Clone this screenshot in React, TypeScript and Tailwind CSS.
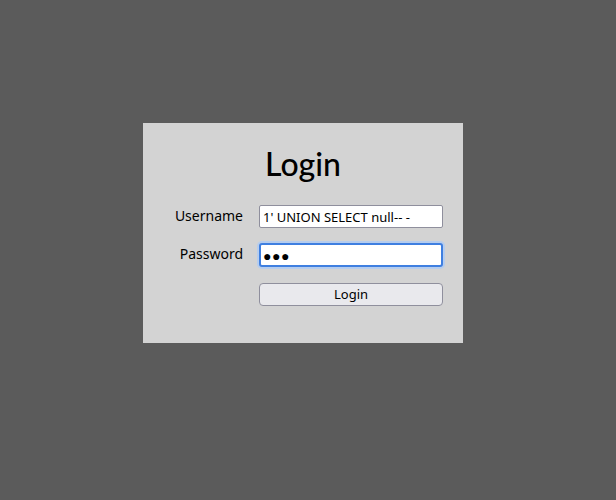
import React from 'react';

const FONT = "font-['Noto_Sans',sans-serif]";

export default function App() {
  return (
    <div className={`min-h-[500px] bg-[#5b5b5b] pt-[123px] pl-[143px] ${FONT}`}>
      <div className="w-[320px] h-[220px] bg-[#d3d3d3] pt-[19px] text-black">
        <h1 className="font-['Lato',sans-serif] text-[32px] font-medium leading-[44px] text-center">Login</h1>
        <form
          className="grid grid-cols-[100px_184px] gap-x-4 items-center mt-[19px]"
          onSubmit={(e) => e.preventDefault()}
        >
          <label className="text-[14px] leading-[19px] text-right mb-[3px]">Username</label>
          <input
            type="text"
            readOnly
            value="1' UNION SELECT null-- -"
            className="h-[23px] bg-white border border-[#8f8f9d] rounded-[2px] px-[3px] text-[13px] leading-[19px] text-black outline-none"
          />

          <label className="text-[14px] leading-[19px] text-right mt-[15px] mb-[3px]">Password</label>
          <input
            type="text"
            readOnly
            value="●●●"
            aria-label="Password"
            className="h-[24px] mt-[15px] bg-white border-2 border-[#3f7fe0] rounded-[3px] px-[2px] text-[14px] tracking-[0.5px] text-black outline-none ring-2 ring-[#b6cdee]"
          />

          <div />
          <button
            type="submit"
            className="h-[23px] mt-[16px] bg-[#e9e9ed] border border-[#8f8f9d] rounded-[4px] text-[13px] leading-[19px] text-black"
          >
            Login
          </button>
        </form>
      </div>
    </div>
  );
}
